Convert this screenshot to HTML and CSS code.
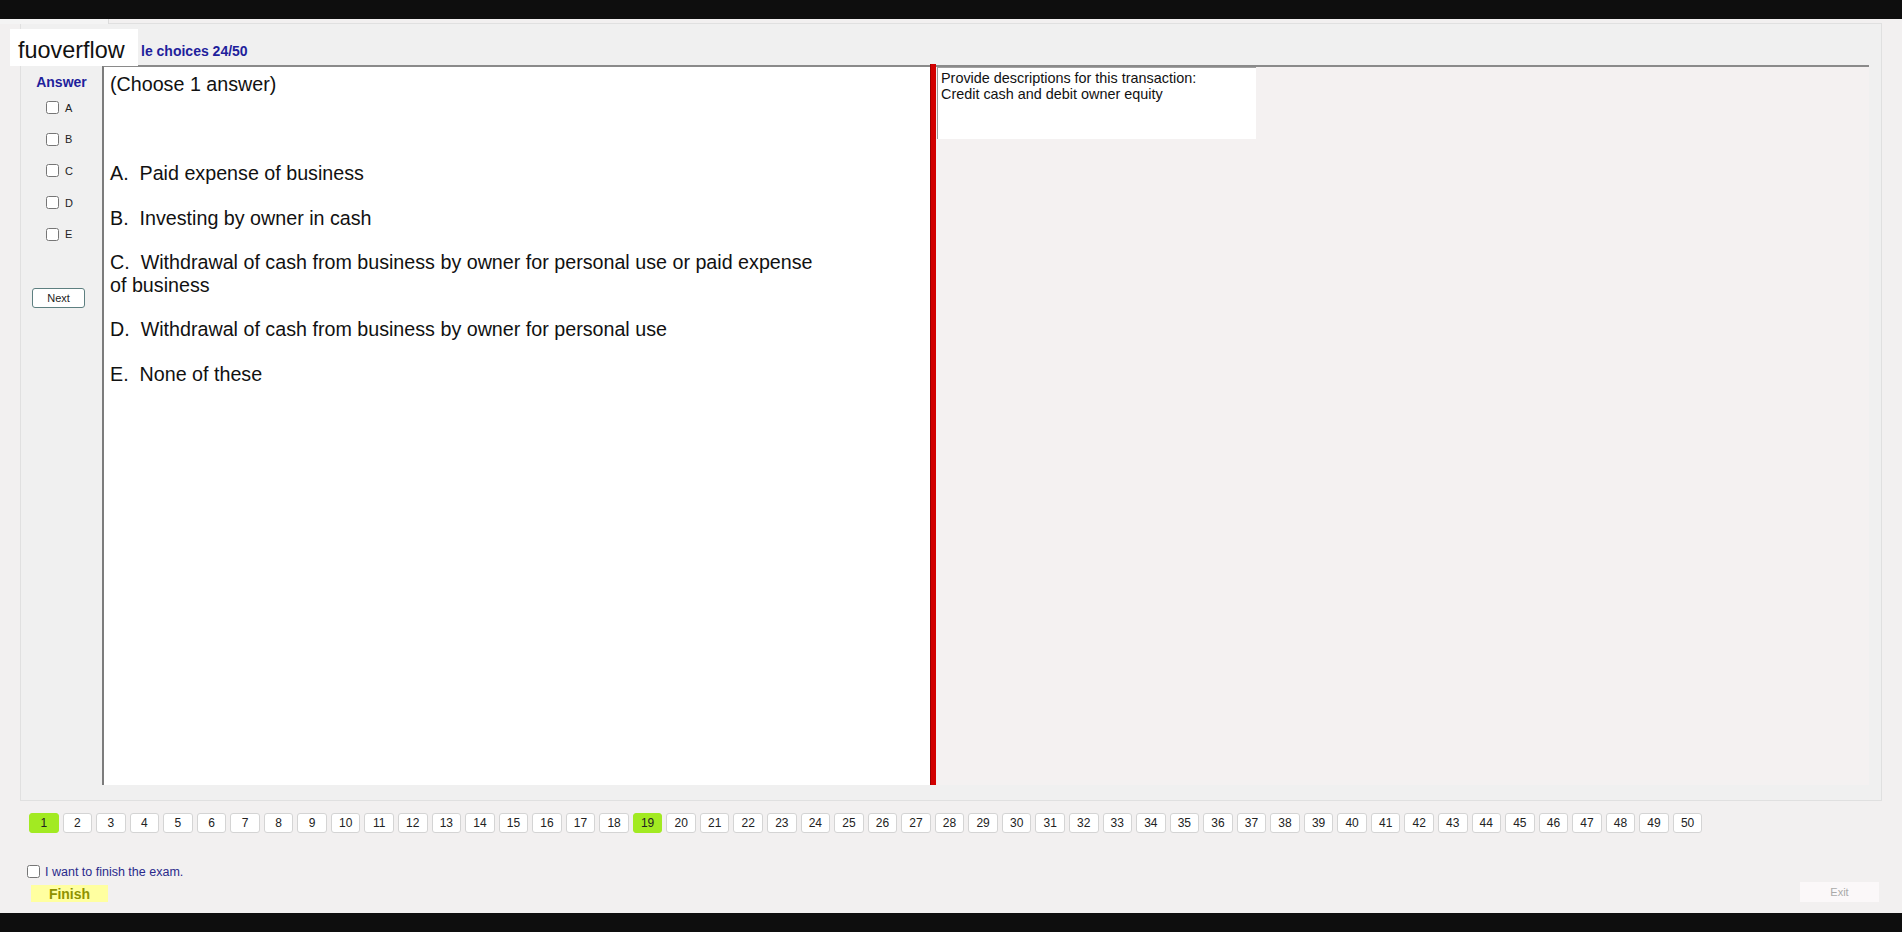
FILE: index.html
```html
<!DOCTYPE html>
<html>
<head>
<meta charset="utf-8">
<title>Exam</title>
<link rel="stylesheet" href="styles.css">
</head>
<body>
<div class="blackbar"></div>
<div class="screen">
  <div class="tabs"><div class="tab"></div><div class="tabrest"></div></div>
  <div class="frame">
    <div class="header"><span class="title">le choices 24/50</span></div>
    <div class="content">
      <div class="answer-col">
        <div class="answer-title">Answer</div>
        <label class="opt"><input type="checkbox"><span>A</span></label>
        <label class="opt"><input type="checkbox"><span>B</span></label>
        <label class="opt"><input type="checkbox"><span>C</span></label>
        <label class="opt"><input type="checkbox"><span>D</span></label>
        <label class="opt"><input type="checkbox"><span>E</span></label>
        <button class="next">Next</button>
      </div>
      <div class="question">(Choose 1 answer)<br><br><br><br>A.&nbsp; Paid expense of business<br><br>B.&nbsp; Investing by owner in cash<br><br>C.&nbsp; Withdrawal of cash from business by owner for personal use or paid expense<br>of business<br><br>D.&nbsp; Withdrawal of cash from business by owner for personal use<br><br>E.&nbsp; None of these</div>
      <div class="splitter"></div>
      <div class="side">
        <div class="desc">Provide descriptions for this transaction:<br>Credit cash and debit owner equity</div>
      </div>
    </div>
  </div>
  <div class="pages">
    <span class="pg done">1</span><span class="pg">2</span><span class="pg">3</span><span class="pg">4</span><span class="pg">5</span><span class="pg">6</span><span class="pg">7</span><span class="pg">8</span><span class="pg">9</span><span class="pg">10</span><span class="pg">11</span><span class="pg">12</span><span class="pg">13</span><span class="pg">14</span><span class="pg">15</span><span class="pg">16</span><span class="pg">17</span><span class="pg">18</span><span class="pg done">19</span><span class="pg">20</span><span class="pg">21</span><span class="pg">22</span><span class="pg">23</span><span class="pg">24</span><span class="pg">25</span><span class="pg">26</span><span class="pg">27</span><span class="pg">28</span><span class="pg">29</span><span class="pg">30</span><span class="pg">31</span><span class="pg">32</span><span class="pg">33</span><span class="pg">34</span><span class="pg">35</span><span class="pg">36</span><span class="pg">37</span><span class="pg">38</span><span class="pg">39</span><span class="pg">40</span><span class="pg">41</span><span class="pg">42</span><span class="pg">43</span><span class="pg">44</span><span class="pg">45</span><span class="pg">46</span><span class="pg">47</span><span class="pg">48</span><span class="pg">49</span><span class="pg">50</span>
  </div>
  <div class="footer">
    <div class="footer-left">
      <label class="finish-check"><input type="checkbox"><span>I want to finish the exam.</span></label>
      <button class="finish">Finish</button>
    </div>
    <button class="exit">Exit</button>
  </div>
</div>
<div class="blackbar"></div>
<div class="brand">fuoverflow</div>
</body>
</html>
```
FILE: styles.css
```css
html, body {
  margin: 0;
  padding: 0;
}
body {
  width: 1902px;
  height: 932px;
  overflow: hidden;
  background: #0e0e0e;
  font-family: "Liberation Sans", Arial, sans-serif;
  position: relative;
}
.blackbar {
  height: 19px;
  background: #0e0e0e;
}
.screen {
  height: 894px;
  background: #f2f0f0;
  display: flex;
  flex-direction: column;
}
.tabs {
  display: flex;
  height: 5px;
}
.tab {
  width: 108px;
  background: #f4f4f4;
  border-right: 1px solid #dcdcdc;
}
.tabrest {
  flex: 1;
  border-bottom: 1px solid #e0e0e0;
  margin-right: 20px;
}
.frame {
  margin-left: 20px;
  width: 1862px;
  height: 777px;
  box-sizing: border-box;
  border: 1px solid #e0e0e0;
  border-top: none;
  background: #f0f0f0;
  display: flex;
  flex-direction: column;
}
.header {
  height: 41px;
  display: flex;
  align-items: center;
  padding-left: 120px;
  padding-top: 13px;
  box-sizing: border-box;
}
.title {
  font-weight: bold;
  font-size: 14px;
  color: #1f1f9c;
  white-space: nowrap;
}
.content {
  display: flex;
  height: 720px;
}
.answer-col {
  width: 81px;
  display: flex;
  flex-direction: column;
}
.answer-title {
  text-align: center;
  font-weight: bold;
  font-size: 14px;
  line-height: 16px;
  color: #1f1f9c;
  padding-top: 9px;
  margin-bottom: 2px;
}
.opt {
  height: 31.6px;
  display: flex;
  align-items: center;
  padding-left: 25px;
  gap: 6px;
  font-size: 11px;
  color: #222;
}
.opt input, .finish-check input {
  width: 13px;
  height: 13px;
  margin: 0;
}
.next {
  margin: 38px 0 0 11px;
  width: 53px;
  height: 20px;
  padding: 0;
  background: #fff;
  border: 1px solid #5d7f80;
  border-radius: 3px;
  font-family: "Liberation Sans", Arial, sans-serif;
  font-size: 11px;
  color: #222;
}
.question {
  width: 828px;
  box-sizing: border-box;
  background: #fff;
  border-left: 2px solid #7c7c7c;
  border-top: 2px solid #8a8a8a;
  padding: 6px 6px;
  font-size: 19.7px;
  line-height: 22.3px;
  color: #111;
  white-space: nowrap;
}
.splitter {
  width: 6px;
  background: #d20000;
  border-left: 1px solid #9a0000;
  box-sizing: border-box;
  margin-top: -1px;
}
.side {
  width: 933px;
  background: #f4f1f1;
  border-top: 2px solid #8a8a8a;
  box-sizing: border-box;
}
.desc {
  width: 319px;
  height: 72px;
  box-sizing: border-box;
  background: #fff;
  border-left: 1px solid #9a9a9a;
  border-top: 1px solid #a0a0a0;
  margin-left: 1px;
  padding: 2px 3px;
  font-size: 14.4px;
  line-height: 16px;
  color: #111;
}
.pages {
  display: flex;
  gap: 4px;
  padding-left: 29px;
  margin-top: 12px;
  height: 20px;
}
.pg {
  width: 29.55px;
  height: 20px;
  flex: none;
  box-sizing: border-box;
  border: 1px solid #d4d4d4;
  border-radius: 3px;
  background: #fff;
  font-size: 12px;
  line-height: 18px;
  text-align: center;
  color: #222;
}
.pg.done {
  background: #a2ea22;
  border-color: #a2ea22;
}
.footer {
  display: flex;
  justify-content: space-between;
  align-items: flex-end;
  padding: 0 23px 0 27px;
  margin-top: 32px;
}
.footer-left {
  display: flex;
  flex-direction: column;
}
.finish-check {
  display: flex;
  align-items: center;
  gap: 5px;
  font-size: 12.5px;
  color: #2a2a8c;
  height: 13px;
}
.finish {
  margin: 7px 0 0 4px;
  width: 77px;
  height: 17px;
  padding: 0;
  border: none;
  background: #ffffa0;
  font-family: "Liberation Sans", Arial, sans-serif;
  font-weight: bold;
  font-size: 14px;
  color: #8f9200;
}
.exit {
  width: 79px;
  height: 20px;
  padding: 0;
  border: none;
  background: #fbf8f9;
  font-family: "Liberation Sans", Arial, sans-serif;
  font-size: 11px;
  color: #aaa;
  margin-bottom: 0;
}
.brand {
  position: absolute;
  left: 10px;
  top: 29px;
  width: 128px;
  height: 37px;
  box-sizing: border-box;
  background: #fff;
  padding: 7px 0 0 8px;
  font-size: 23.4px;
  line-height: 28px;
  color: #111;
}
```
